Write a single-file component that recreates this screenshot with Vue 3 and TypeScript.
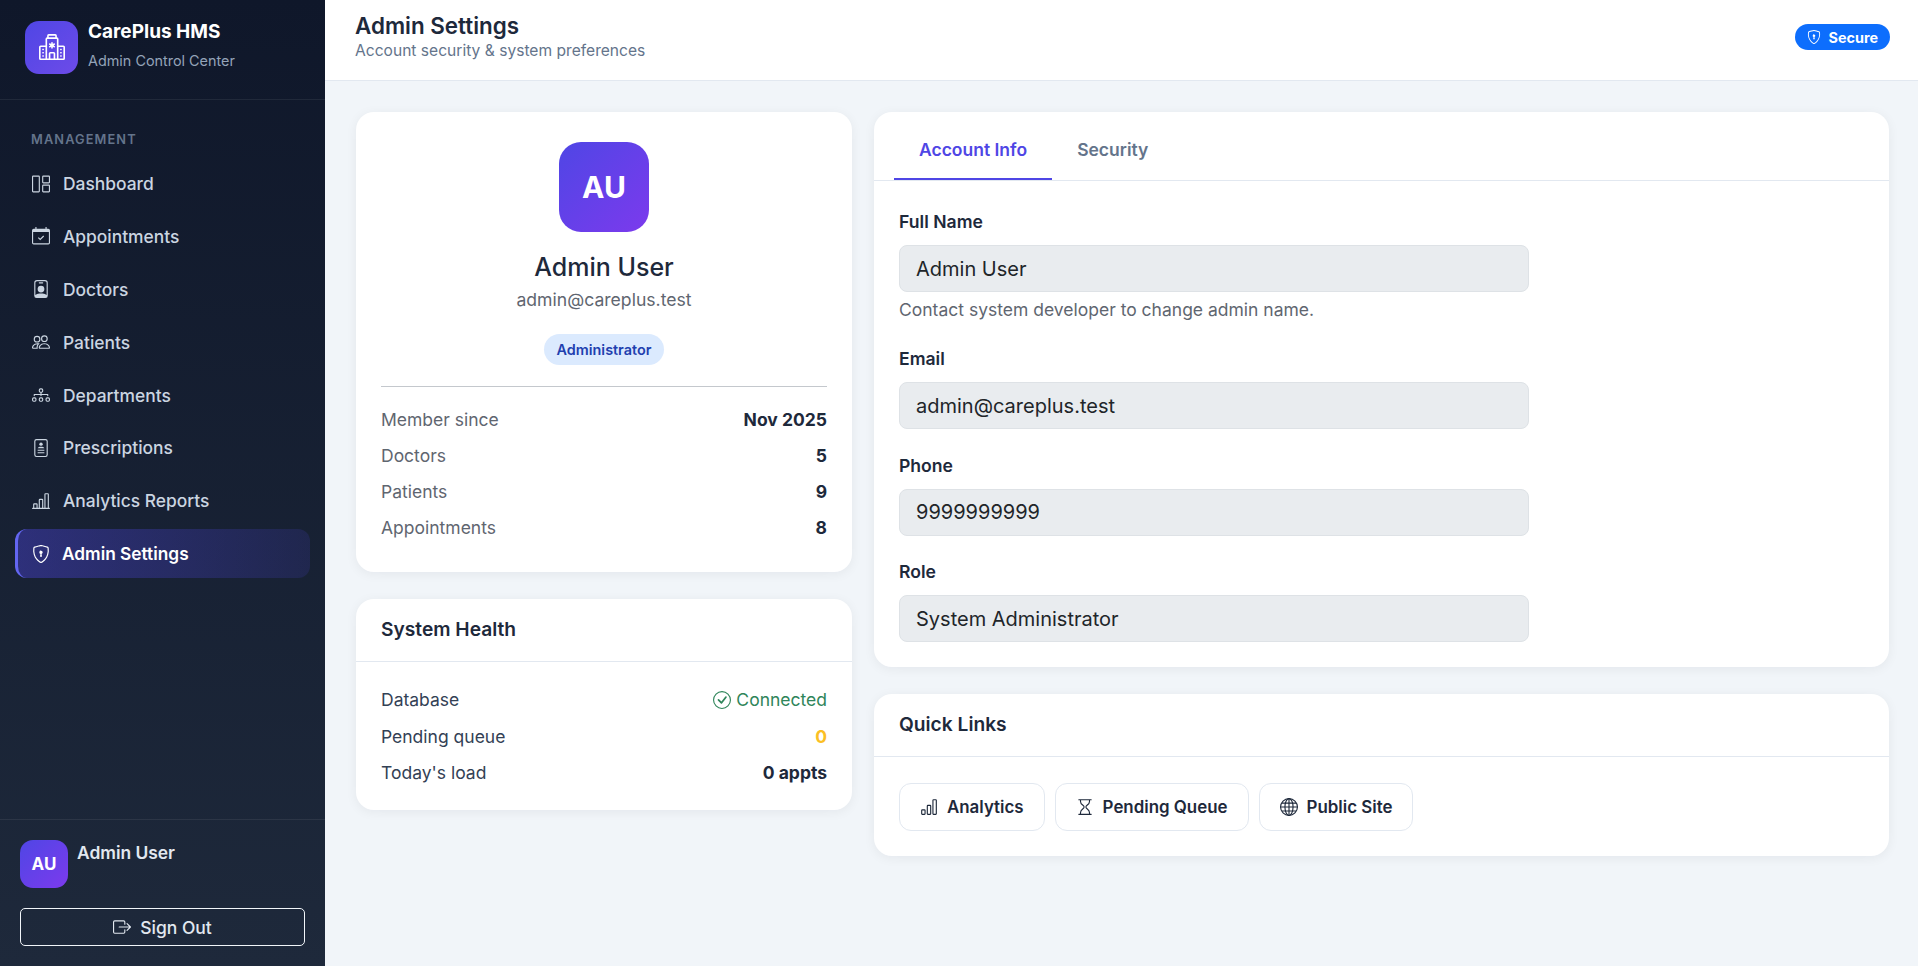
<script setup lang="ts">
import { ref } from 'vue'

const icons: Record<string, string> = {
  hospital:
    '<path fill="currentColor" d="M8.5 5.034v1.1l.953-.55.5.867L9 7l.953.55-.5.866-.953-.55v1.1h-1v-1.1l-.953.55-.5-.866L7 7l-.953-.55.5-.866.953.55v-1.1zM13.25 9a.25.25 0 0 0-.25.25v.5c0 .138.112.25.25.25h.5a.25.25 0 0 0 .25-.25v-.5a.25.25 0 0 0-.25-.25zM13 11.25a.25.25 0 0 1 .25-.25h.5a.25.25 0 0 1 .25.25v.5a.25.25 0 0 1-.25.25h-.5a.25.25 0 0 1-.25-.25zm.25 1.75a.25.25 0 0 0-.25.25v.5c0 .138.112.25.25.25h.5a.25.25 0 0 0 .25-.25v-.5a.25.25 0 0 0-.25-.25zm-11-4a.25.25 0 0 0-.25.25v.5c0 .138.112.25.25.25h.5A.25.25 0 0 0 3 9.75v-.5A.25.25 0 0 0 2.75 9zm0 2a.25.25 0 0 0-.25.25v.5c0 .138.112.25.25.25h.5a.25.25 0 0 0 .25-.25v-.5a.25.25 0 0 0-.25-.25zM2 13.25a.25.25 0 0 1 .25-.25h.5a.25.25 0 0 1 .25.25v.5a.25.25 0 0 1-.25.25h-.5a.25.25 0 0 1-.25-.25z"/><path fill="currentColor" d="M5 1a1 1 0 0 1 1-1h4a1 1 0 0 1 1 1v1a1 1 0 0 1 1 1v4h3a1 1 0 0 1 1 1v7a1 1 0 0 1-1 1H1a1 1 0 0 1-1-1V8a1 1 0 0 1 1-1h3V3a1 1 0 0 1 1-1zm2 14h2v-3H7zm3 0h1V3H5v12h1v-3a1 1 0 0 1 1-1h2a1 1 0 0 1 1 1zm0-14H6v1h4zm2 7v7h3V8zm-8 7V8H1v7z"/>',
  dashboard:
    '<g fill="none" stroke="currentColor"><rect x=".5" y="1" width="6" height="14" rx=".5"/><rect x="9.5" y="1" width="6" height="6" rx=".5"/><rect x="9.5" y="9" width="6" height="6" rx=".5"/></g>',
  calendar:
    '<path fill="currentColor" d="M3 0h1v2H3zM12 0h1v2h-1zM1.5 1.5h13A1.5 1.5 0 0 1 16 3v11a1.5 1.5 0 0 1-1.5 1.5h-13A1.5 1.5 0 0 1 0 14V3a1.5 1.5 0 0 1 1.5-1.5M1 4.5V14a.5.5 0 0 0 .5.5h13a.5.5 0 0 0 .5-.5V4.5z"/><path fill="none" stroke="currentColor" d="M5.6 9.4 7.3 11l3.1-3"/>',
  doctor:
    '<path fill="currentColor" d="M6.5 2a.5.5 0 0 0 0 1h3a.5.5 0 0 0 0-1zM11 8a3 3 0 1 1-6 0 3 3 0 0 1 6 0"/><path fill="currentColor" d="M4.5 0A2.5 2.5 0 0 0 2 2.5V14a2 2 0 0 0 2 2h8a2 2 0 0 0 2-2V2.5A2.5 2.5 0 0 0 11.5 0zM3 2.5A1.5 1.5 0 0 1 4.5 1h7A1.5 1.5 0 0 1 13 2.5v10.795a4.2 4.2 0 0 0-.776-.492C11.392 12.387 10.063 12 8 12s-3.392.387-4.224.803a4.2 4.2 0 0 0-.776.492z"/>',
  people:
    '<path fill="currentColor" d="M15 14s1 0 1-1-1-4-5-4-5 3-5 4 1 1 1 1zm-7.978-1L7 12.996c.001-.264.167-1.03.76-1.72C8.312 10.629 9.282 10 11 10c1.717 0 2.687.63 3.24 1.276.593.69.758 1.457.76 1.72l-.008.002-.014.002zM11 7a2 2 0 1 0 0-4 2 2 0 0 0 0 4m3-2a3 3 0 1 1-6 0 3 3 0 0 1 6 0M6.936 9.28a6 6 0 0 0-1.23-.247A7 7 0 0 0 5 9c-4 0-5 3-5 4q0 1 1 1h4.216A2.24 2.24 0 0 1 5 13c0-1.01.377-2.042 1.09-2.904.243-.294.526-.569.846-.816M4.92 10A5.5 5.5 0 0 0 4 13H1c0-.26.164-1.03.76-1.724.545-.636 1.492-1.256 3.16-1.275ZM1.5 5.5a3 3 0 1 1 6 0 3 3 0 0 1-6 0m3-2a2 2 0 1 0 0 4 2 2 0 0 0 0-4"/>',
  diagram:
    '<path fill="currentColor" fill-rule="evenodd" d="M6 3.5A1.5 1.5 0 0 1 7.5 2h1A1.5 1.5 0 0 1 10 3.5v1A1.5 1.5 0 0 1 8.5 6v1H14a.5.5 0 0 1 .5.5v1a.5.5 0 0 1-1 0V8h-5v.5a.5.5 0 0 1-1 0V8h-5v.5a.5.5 0 0 1-1 0v-1A.5.5 0 0 1 2 7h5.5V6A1.5 1.5 0 0 1 6 4.5zM8.5 5a.5.5 0 0 0 .5-.5v-1a.5.5 0 0 0-.5-.5h-1a.5.5 0 0 0-.5.5v1a.5.5 0 0 0 .5.5zM0 11.5A1.5 1.5 0 0 1 1.5 10h1A1.5 1.5 0 0 1 4 11.5v1A1.5 1.5 0 0 1 2.5 14h-1A1.5 1.5 0 0 1 0 12.5zm1.5-.5a.5.5 0 0 0-.5.5v1a.5.5 0 0 0 .5.5h1a.5.5 0 0 0 .5-.5v-1a.5.5 0 0 0-.5-.5zm4.5.5A1.5 1.5 0 0 1 7.5 10h1a1.5 1.5 0 0 1 1.5 1.5v1A1.5 1.5 0 0 1 8.5 14h-1A1.5 1.5 0 0 1 6 12.5zm1.5-.5a.5.5 0 0 0-.5.5v1a.5.5 0 0 0 .5.5h1a.5.5 0 0 0 .5-.5v-1a.5.5 0 0 0-.5-.5zm4.5.5a1.5 1.5 0 0 1 1.5-1.5h1a1.5 1.5 0 0 1 1.5 1.5v1a1.5 1.5 0 0 1-1.5 1.5h-1a1.5 1.5 0 0 1-1.5-1.5zm1.5-.5a.5.5 0 0 0-.5.5v1a.5.5 0 0 0 .5.5h1a.5.5 0 0 0 .5-.5v-1a.5.5 0 0 0-.5-.5z"/>',
  prescription:
    '<rect x="2.5" y=".5" width="11" height="15" rx="1.5" fill="none" stroke="currentColor"/><circle cx="8" cy="4.6" r="1.5" fill="currentColor"/><path fill="currentColor" d="M5 8.2c.5-1 1.6-1.4 3-1.4s2.5.4 3 1.4z"/><path stroke="currentColor" d="M5 10h6M5 12.2h6"/>',
  chartLine:
    '<path fill="currentColor" d="M11 2a1 1 0 0 1 1-1h2a1 1 0 0 1 1 1v12h.5a.5.5 0 0 1 0 1H.5a.5.5 0 0 1 0-1H1v-3a1 1 0 0 1 1-1h2a1 1 0 0 1 1 1v3h1V7a1 1 0 0 1 1-1h2a1 1 0 0 1 1 1v7h1zm1 12h2V2h-2zm-3 0V7H7v7zm-5 0v-3H2v3z"/>',
  chart:
    '<path fill="currentColor" d="M4 11H2v3h2zm5-4H7v7h2zm5-5v12h-2V2zm-2-1a1 1 0 0 0-1 1v12a1 1 0 0 0 1 1h2a1 1 0 0 0 1-1V2a1 1 0 0 0-1-1zM6 7a1 1 0 0 1 1-1h2a1 1 0 0 1 1 1v7a1 1 0 0 1-1 1H7a1 1 0 0 1-1-1zm-5 4a1 1 0 0 1 1-1h2a1 1 0 0 1 1 1v3a1 1 0 0 1-1 1H2a1 1 0 0 1-1-1z"/>',
  shield:
    '<path fill="currentColor" d="M5.338 1.59a61 61 0 0 0-2.837.856.48.48 0 0 0-.328.39c-.554 4.157.726 7.19 2.253 9.188a10.7 10.7 0 0 0 2.287 2.233c.346.244.652.42.893.533q.18.085.293.118a1 1 0 0 0 .101.025 1 1 0 0 0 .1-.025q.114-.034.294-.118c.24-.113.547-.29.893-.533a10.7 10.7 0 0 0 2.287-2.233c1.527-1.997 2.807-5.031 2.253-9.188a.48.48 0 0 0-.328-.39c-.651-.213-1.75-.56-2.837-.855C9.552 1.29 8.531 1.067 8 1.067c-.53 0-1.552.223-2.662.524zM5.072.56C6.157.265 7.31 0 8 0s1.843.265 2.928.56c1.11.3 2.229.655 2.887.87a1.54 1.54 0 0 1 1.044 1.262c.596 4.477-.787 7.795-2.465 9.99a11.8 11.8 0 0 1-2.517 2.453 7 7 0 0 1-1.048.625c-.28.132-.581.24-.829.24s-.548-.108-.829-.24a7 7 0 0 1-1.048-.625 11.8 11.8 0 0 1-2.517-2.453C1.928 10.487.545 7.169 1.141 2.692A1.54 1.54 0 0 1 2.185 1.43 63 63 0 0 1 5.072.56"/><path fill="currentColor" d="M9.5 6.5a1.5 1.5 0 0 1-1 1.415l.385 1.99a.5.5 0 0 1-.491.595h-.788a.5.5 0 0 1-.49-.595l.384-1.99a1.5 1.5 0 1 1 2-1.415"/>',
  signout:
    '<path fill="currentColor" d="M10 12.5a.5.5 0 0 1-.5.5h-8a.5.5 0 0 1-.5-.5v-9a.5.5 0 0 1 .5-.5h8a.5.5 0 0 1 .5.5v2a.5.5 0 0 0 1 0v-2A1.5 1.5 0 0 0 9.5 2h-8A1.5 1.5 0 0 0 0 3.5v9A1.5 1.5 0 0 0 1.5 14h8a1.5 1.5 0 0 0 1.5-1.5v-2a.5.5 0 0 0-1 0z"/><path fill="currentColor" d="M15.854 8.354a.5.5 0 0 0 0-.708l-3-3a.5.5 0 0 0-.708.708L14.293 7.5H5.5a.5.5 0 0 0 0 1h8.793l-2.147 2.146a.5.5 0 0 0 .708.708z"/>',
  check:
    '<path fill="currentColor" d="M8 15A7 7 0 1 1 8 1a7 7 0 0 1 0 14m0 1A8 8 0 1 0 8 0a8 8 0 0 0 0 16"/><path fill="currentColor" d="m10.97 4.97-.02.022-3.473 4.425-2.093-2.094a.75.75 0 0 0-1.06 1.06L6.97 11.03a.75.75 0 0 0 1.071-.02l3.992-4.99a.75.75 0 0 0-1.071-1.05"/>',
  hourglass:
    '<path fill="none" stroke="currentColor" stroke-linecap="round" d="M2.5 1.5h11M2.5 14.5h11M4 1.5V3c0 3 3.2 3.3 3.2 5S4 10 4 13v1.5M12 1.5V3c0 3-3.2 3.3-3.2 5S12 10 12 13v1.5"/>',
  globe:
    '<g fill="none" stroke="currentColor"><circle cx="8" cy="8" r="7.5"/><ellipse cx="8" cy="8" rx="3.6" ry="7.5"/><path d="M8 .5v15M.5 8h15M1.6 4.5h12.8M1.6 11.5h12.8"/></g>',
}

const navItems = [
  { label: 'Dashboard', icon: 'dashboard' },
  { label: 'Appointments', icon: 'calendar' },
  { label: 'Doctors', icon: 'doctor' },
  { label: 'Patients', icon: 'people' },
  { label: 'Departments', icon: 'diagram' },
  { label: 'Prescriptions', icon: 'prescription' },
  { label: 'Analytics Reports', icon: 'chartLine' },
  { label: 'Admin Settings', icon: 'shield', active: true },
]

const stats = [
  { label: 'Member since', value: 'Nov 2025' },
  { label: 'Doctors', value: '5' },
  { label: 'Patients', value: '9' },
  { label: 'Appointments', value: '8' },
]

const quickLinks = [
  { label: 'Analytics', icon: 'chart' },
  { label: 'Pending Queue', icon: 'hourglass' },
  { label: 'Public Site', icon: 'globe' },
]

const activeTab = ref('account')
</script>

<template>
  <div class="layout">
    <aside class="sidebar">
      <div class="brand">
        <div class="brand-logo">
          <svg class="brand-icon" viewBox="0 0 16 16" v-html="icons.hospital"></svg>
        </div>
        <div class="brand-copy">
          <div class="brand-name">CarePlus HMS</div>
          <div class="brand-sub">Admin Control Center</div>
        </div>
      </div>

      <nav class="nav">
        <div class="nav-heading">MANAGEMENT</div>
        <a
          v-for="item in navItems"
          :key="item.label"
          class="nav-link"
          :class="{ 'nav-link--active': item.active }"
        >
          <svg class="nav-icon" viewBox="0 0 16 16" v-html="icons[item.icon]"></svg>
          <span>{{ item.label }}</span>
        </a>
      </nav>

      <div class="side-footer">
        <div class="side-user">
          <div class="side-avatar">AU</div>
          <div class="side-user-name">Admin User</div>
        </div>
        <button class="signout" type="button">
          <svg class="signout-icon" viewBox="0 0 16 16" v-html="icons.signout"></svg>
          Sign Out
        </button>
      </div>
    </aside>

    <div class="content">
      <header class="topbar">
        <div>
          <h1 class="page-title">Admin Settings</h1>
          <p class="page-sub">Account security &amp; system preferences</p>
        </div>
        <span class="secure">
          <svg class="secure-icon" viewBox="0 0 16 16" v-html="icons.shield"></svg>
          Secure
        </span>
      </header>

      <main class="grid">
        <div class="col">
          <section class="card profile">
            <div class="profile-avatar">AU</div>
            <h2 class="profile-name">Admin User</h2>
            <div class="profile-mail">admin@careplus.test</div>
            <span class="role-badge">Administrator</span>
            <hr class="profile-rule" />
            <div class="stat-list">
              <div v-for="s in stats" :key="s.label" class="stat-row">
                <span class="stat-label">{{ s.label }}</span>
                <strong class="stat-value">{{ s.value }}</strong>
              </div>
            </div>
          </section>

          <section class="card">
            <div class="card-head">System Health</div>
            <div class="health-body">
              <div class="stat-row">
                <span class="health-label">Database</span>
                <span class="connected">
                  <svg class="connected-icon" viewBox="0 0 16 16" v-html="icons.check"></svg>
                  Connected
                </span>
              </div>
              <div class="stat-row">
                <span class="health-label">Pending queue</span>
                <strong class="stat-value stat-value--warn">0</strong>
              </div>
              <div class="stat-row">
                <span class="health-label">Today's load</span>
                <strong class="stat-value">0 appts</strong>
              </div>
            </div>
          </section>
        </div>

        <div class="col">
          <section class="card">
            <div class="tabs">
              <button
                class="tab"
                :class="{ 'tab--active': activeTab === 'account' }"
                type="button"
                @click="activeTab = 'account'"
              >
                Account Info
              </button>
              <button
                class="tab"
                :class="{ 'tab--active': activeTab === 'security' }"
                type="button"
                @click="activeTab = 'security'"
              >
                Security
              </button>
            </div>
            <form class="account-form" @submit.prevent>
              <div class="field">
                <label class="field-label">Full Name</label>
                <input class="field-input" value="Admin User" readonly />
                <p class="field-help">Contact system developer to change admin name.</p>
              </div>
              <div class="field">
                <label class="field-label">Email</label>
                <input class="field-input" value="admin@careplus.test" readonly />
              </div>
              <div class="field">
                <label class="field-label">Phone</label>
                <input class="field-input" value="9999999999" readonly />
              </div>
              <div class="field">
                <label class="field-label">Role</label>
                <input class="field-input" value="System Administrator" readonly />
              </div>
            </form>
          </section>

          <section class="card">
            <div class="card-head">Quick Links</div>
            <div class="links">
              <a v-for="l in quickLinks" :key="l.label" class="link-btn">
                <svg class="link-icon" viewBox="0 0 16 16" v-html="icons[l.icon]"></svg>
                {{ l.label }}
              </a>
            </div>
          </section>
        </div>
      </main>
    </div>
  </div>
</template>

<style>
html,
body {
  margin: 0;
  background: #f1f5f9;
}
</style>

<style scoped>
.layout {
  display: flex;
  height: 966px;
  overflow: hidden;
  font-family: Inter, 'Noto Sans', sans-serif;
  color: #1e293b;
}

.sidebar {
  display: flex;
  flex-direction: column;
  width: 325px;
  flex-shrink: 0;
  background: linear-gradient(180deg, #0f172a 0%, #1e293b 100%);
}

.brand {
  display: flex;
  align-items: center;
  gap: 10px;
  height: 100px;
  box-sizing: border-box;
  padding: 0 25px 5px;
  border-bottom: 1px solid rgba(255, 255, 255, 0.07);
}

.brand-logo {
  display: flex;
  align-items: center;
  justify-content: center;
  width: 53px;
  height: 53px;
  border-radius: 14px;
  background: linear-gradient(135deg, #4f46e5, #6d4be8);
  color: #fff;
}

.brand-icon {
  width: 26px;
  height: 26px;
}

.brand-copy {
  margin-bottom: 5px;
}

.brand-name {
  color: #fff;
  font-size: 19px;
  font-weight: 700;
  line-height: 24px;
}

.brand-sub {
  margin-top: 8px;
  color: #94a3b8;
  font-size: 14.4px;
  line-height: 18px;
}

.nav {
  display: flex;
  flex-direction: column;
  flex: 1;
  padding: 32px 15px 0;
}

.nav-heading {
  margin: 0 0 11px 16px;
  color: #64748b;
  font-size: 12.8px;
  font-weight: 600;
  letter-spacing: 1.1px;
  line-height: 16px;
}

.nav-link {
  display: flex;
  align-items: center;
  gap: 13px;
  height: 49px;
  margin-bottom: 3.9px;
  box-sizing: border-box;
  padding-left: 17px;
  border-radius: 12px;
  color: #cbd5e1;
  font-size: 17.4px;
  font-weight: 500;
}

.nav-link--active {
  border-left: 3px solid #6366f1;
  padding-left: 14px;
  gap: 12px;
  background: linear-gradient(90deg, rgba(79, 70, 229, 0.4), rgba(79, 70, 229, 0.15));
  color: #fff;
  font-size: 17.3px;
  font-weight: 600;
}

.nav-icon {
  width: 18px;
  height: 18px;
  flex-shrink: 0;
}

.side-footer {
  padding: 20px;
  border-top: 1px solid rgba(255, 255, 255, 0.07);
}

.side-user {
  display: flex;
  gap: 9px;
  margin-bottom: 20px;
}

.side-avatar {
  display: flex;
  align-items: center;
  justify-content: center;
  width: 48px;
  height: 48px;
  border-radius: 13px;
  background: linear-gradient(135deg, #4f46e5, #7c3aed);
  color: #fff;
  font-size: 17px;
  font-weight: 700;
}

.side-user-name {
  margin-top: 1px;
  color: #e2e8f0;
  font-size: 17.4px;
  font-weight: 600;
  line-height: 24px;
}

.signout {
  display: flex;
  align-items: center;
  justify-content: center;
  gap: 9px;
  width: 100%;
  height: 38px;
  border: 1px solid #f1f5f9;
  border-radius: 5px;
  background: transparent;
  color: #e2e8f0;
  font: 500 17.5px Inter, sans-serif;
}

.signout-icon {
  width: 18px;
  height: 18px;
}

.content {
  flex: 1;
  min-width: 0;
  background: #f1f5f9;
}

.topbar {
  display: flex;
  align-items: center;
  justify-content: space-between;
  height: 81px;
  box-sizing: border-box;
  padding: 0 28px 8px 30px;
  border-bottom: 1px solid #e2e8f0;
  background: #fff;
}

.page-title {
  margin: 0;
  color: #1e293b;
  font-size: 22.4px;
  font-weight: 600;
  line-height: 28px;
}

.page-sub {
  margin: 1px 0 0;
  color: #64748b;
  font-size: 15.6px;
  line-height: 20px;
}

.secure {
  display: flex;
  align-items: center;
  gap: 7px;
  height: 26px;
  margin-top: 2px;
  padding: 0 12px;
  border-radius: 13px;
  background: #0d6efd;
  color: #fff;
  font-size: 14.4px;
  font-weight: 700;
}

.secure-icon {
  width: 14px;
  height: 14px;
}

.grid {
  display: grid;
  grid-template-columns: 496px 1015px;
  gap: 22px;
  padding: 31px 28px 0 31px;
}

.col {
  display: flex;
  flex-direction: column;
  gap: 27px;
}

.card {
  border-radius: 18px;
  background: #fff;
  box-shadow: 0 2px 12px rgba(15, 23, 42, 0.06);
}

.profile {
  display: flex;
  flex-direction: column;
  align-items: center;
  padding: 30px 25px 32px;
}

.profile-avatar {
  display: flex;
  align-items: center;
  justify-content: center;
  width: 90px;
  height: 90px;
  border-radius: 22px;
  background: linear-gradient(135deg, #4f46e5, #7c3aed);
  color: #fff;
  font-size: 30px;
  font-weight: 700;
}

.profile-name {
  margin: 20px 0 0;
  color: #1e293b;
  font-size: 25px;
  font-weight: 500;
  line-height: 30px;
}

.profile-mail {
  margin-top: 6px;
  color: #5f6670;
  font-size: 17.6px;
  line-height: 24px;
}

.role-badge {
  margin-top: 22px;
  padding: 0 13px;
  border-radius: 16px;
  background: #dbeafe;
  color: #1e40af;
  font-size: 14.4px;
  font-weight: 600;
  line-height: 31px;
}

.profile-rule {
  width: 100%;
  margin: 21px 0 0;
  border: 0;
  border-top: 1px solid #c4c8cd;
}

.stat-list {
  display: flex;
  flex-direction: column;
  gap: 12px;
  width: 100%;
  margin-top: 21px;
}

.stat-row {
  display: flex;
  align-items: center;
  justify-content: space-between;
  line-height: 24px;
  font-size: 17.5px;
}

.stat-label {
  color: #5f6670;
}

.stat-value {
  color: #1e293b;
  font-weight: 700;
}

.stat-value--warn {
  color: #fbbf24;
}

.card-head {
  height: 63px;
  box-sizing: border-box;
  padding: 0 25px;
  border-bottom: 1px solid #e2e8f0;
  color: #1e293b;
  font-size: 19.2px;
  font-weight: 600;
  line-height: 60px;
}

.health-body {
  display: flex;
  flex-direction: column;
  gap: 12.5px;
  padding: 26px 25px 25px;
}

.health-label {
  color: #334155;
}

.connected {
  display: flex;
  align-items: center;
  gap: 5px;
  color: #2f855a;
}

.connected-icon {
  width: 18px;
  height: 18px;
}

.tabs {
  display: flex;
  height: 69px;
  box-sizing: border-box;
  padding: 0 20px;
  border-bottom: 1px solid #e2e8f0;
}

.tab {
  height: 68px;
  padding: 8px 25px 0;
  border: 0;
  border-bottom: 2px solid transparent;
  background: transparent;
  color: #64748b;
  font: 600 17.5px Inter, sans-serif;
}

.tab--active {
  border-bottom-color: #4f46e5;
  color: #4f46e5;
}

.account-form {
  padding: 29px 25px 25px;
}

.field {
  margin-bottom: 24.4px;
}

.field:first-child {
  margin-bottom: 25.3px;
}

.field:last-child {
  margin-bottom: 0;
}

.field-label {
  display: block;
  margin-bottom: 11px;
  color: #1e293b;
  font-size: 17.6px;
  font-weight: 600;
  line-height: 24px;
}

.field-input {
  display: block;
  width: 630px;
  height: 47px;
  box-sizing: border-box;
  padding: 0 16px;
  border: 1px solid #dee2e6;
  border-radius: 8px;
  outline: none;
  background: #e9ecef;
  color: #212529;
  font: 400 20px Inter, sans-serif;
}

.field-help {
  margin: 6px 0 0;
  color: #5f6670;
  font-size: 17.5px;
  line-height: 24px;
}

.links {
  display: flex;
  gap: 10px;
  padding: 26px 25px 25px;
}

.link-btn {
  display: flex;
  align-items: center;
  gap: 9px;
  height: 48px;
  box-sizing: border-box;
  padding: 0 20px;
  border: 1px solid #e2e8f0;
  border-radius: 12px;
  color: #1e293b;
  font-size: 16.9px;
  font-weight: 600;
}

.link-icon {
  width: 18px;
  height: 18px;
}
</style>
